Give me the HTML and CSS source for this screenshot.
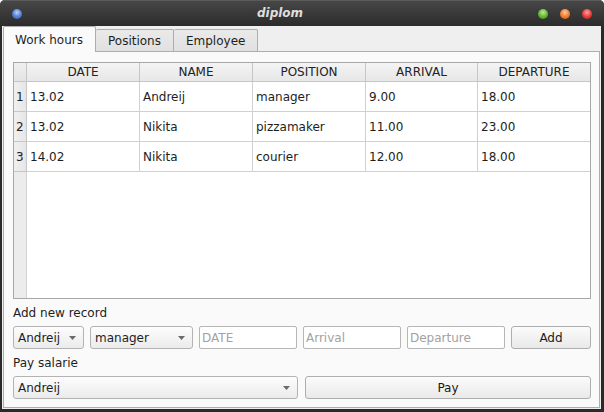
FILE: index.html
```html
<!DOCTYPE html>
<html>
<head>
<meta charset="utf-8">
<link rel="stylesheet" href="styles.css">
</head>
<body>
<div class="window">
  <div class="titlebar">
    <span class="dot blue"></span>
    <span class="title">diplom</span>
    <div class="controls">
      <span class="dot green"></span>
      <span class="dot orange"></span>
      <span class="dot red"></span>
    </div>
  </div>
  <div class="client">
    <div class="tabs">
      <div class="tab active">Work hours</div>
      <div class="tab">Positions</div>
      <div class="tab">Employee</div>
    </div>
    <div class="pane">
      <div class="table">
        <div class="hcell corner"></div>
        <div class="hcell">DATE</div>
        <div class="hcell">NAME</div>
        <div class="hcell">POSITION</div>
        <div class="hcell">ARRIVAL</div>
        <div class="hcell last">DEPARTURE</div>

        <div class="vcell">1</div>
        <div class="cell">13.02</div>
        <div class="cell">Andreij</div>
        <div class="cell">manager</div>
        <div class="cell">9.00</div>
        <div class="cell last">18.00</div>

        <div class="vcell">2</div>
        <div class="cell">13.02</div>
        <div class="cell">Nikita</div>
        <div class="cell">pizzamaker</div>
        <div class="cell">11.00</div>
        <div class="cell last">23.00</div>

        <div class="vcell">3</div>
        <div class="cell">14.02</div>
        <div class="cell">Nikita</div>
        <div class="cell">courier</div>
        <div class="cell">12.00</div>
        <div class="cell last">18.00</div>

        <div class="vfill"></div>
        <div class="fill"></div>
      </div>

      <div class="label">Add new record</div>
      <div class="row1">
        <div class="combo w71"><span>Andreij</span><svg width="7" height="4" viewBox="0 0 7 4"><polygon points="0,0 7,0 3.5,4" fill="#6a6a6a"/></svg></div>
        <div class="combo w103"><span>manager</span><svg width="7" height="4" viewBox="0 0 7 4"><polygon points="0,0 7,0 3.5,4" fill="#6a6a6a"/></svg></div>
        <div class="input w98">DATE</div>
        <div class="input w98">Arrival</div>
        <div class="input w98">Departure</div>
        <div class="button w80">Add</div>
      </div>

      <div class="label">Pay salarie</div>
      <div class="row2">
        <div class="combo"><span>Andreij</span><svg width="7" height="4" viewBox="0 0 7 4"><polygon points="0,0 7,0 3.5,4" fill="#6a6a6a"/></svg></div>
        <div class="button">Pay</div>
      </div>
    </div>
  </div>
</div>
</body>
</html>
```

FILE: styles.css
```css
* { box-sizing: border-box; }

html, body {
  margin: 0;
  padding: 0;
  background: #ffffff;
}

body {
  font-family: "DejaVu Sans", sans-serif;
  font-size: 12px;
  color: #1e1e1e;
}

.window {
  width: 604px;
  height: 412px;
  background: #2a2a2a;
  border-radius: 5px 5px 0 0;
  padding: 0 3px 3px 2px;
  display: flex;
  flex-direction: column;
}

.titlebar {
  height: 26px;
  margin: 0 -3px 0 -2px;
  padding: 0 12px;
  border-radius: 5px 5px 0 0;
  background: linear-gradient(#474747, #2b2b2b);
  border-top: 1px solid #5a5a5a;
  display: flex;
  align-items: center;
}

.dot {
  width: 10px;
  height: 10px;
  border-radius: 50%;
  display: block;
  flex: none;
}

.blue { background: radial-gradient(circle at 50% 35%, #c0d4f8 0%, #5f88db 45%, #2f52a6 100%); }
.green { background: radial-gradient(circle at 50% 35%, #bdec93 0%, #66b834 50%, #3f8a1b 100%); }
.orange { background: radial-gradient(circle at 50% 35%, #fbc8a0 0%, #f08034 50%, #c05514 100%); }
.red { background: radial-gradient(circle at 50% 35%, #fca4a4 0%, #ec4040 50%, #b01c1c 100%); }

.title {
  flex: 1;
  text-align: center;
  font-weight: bold;
  font-style: italic;
  color: #dedede;
  font-size: 12px;
  line-height: 14px;
  margin-top: -1px;
}

.controls {
  display: flex;
  gap: 12px;
}

.client {
  flex: 1;
  background: #efefef;
  padding: 0 1px 1px 1px;
  display: flex;
  flex-direction: column;
}

.tabs {
  height: 25px;
  display: flex;
  align-items: flex-end;
  position: relative;
  z-index: 1;
}

.tab {
  height: 22px;
  padding: 0 12px;
  border: 1px solid #adadad;
  border-bottom: none;
  border-left: none;
  border-radius: 2px 2px 0 0;
  background: linear-gradient(#eaeaea, #e0e0e0);
  display: flex;
  align-items: center;
  line-height: 14px;
  color: #1e1e1e;
}

.tab.active {
  height: 26px;
  margin-bottom: -1px;
  border-left: 1px solid #adadad;
  background: #fafafa;
  padding: 0 12px 0 11px;
  width: 93px;
}

.pane {
  flex: 1;
  background: #fafafa;
  border: 1px solid #adadad;
  padding: 10px 8px 8px 9px;
  display: flex;
  flex-direction: column;
}

.table {
  height: 237px;
  border: 1px solid #a8a8a8;
  background: #ffffff;
  display: grid;
  grid-template-columns: 13px 113px 113px 113px 112px 1fr;
  grid-template-rows: 19px 30px 30px 30px 1fr;
  margin-bottom: 7px;
}

.hcell {
  background: linear-gradient(#f4f4f4, #e7e7e7);
  border-right: 1px solid #c6c6c6;
  border-bottom: 1px solid #c6c6c6;
  display: flex;
  align-items: center;
  justify-content: center;
  line-height: 14px;
  color: #222;
}

.hcell.corner { background: linear-gradient(#efefef, #e4e4e4); }

.vcell {
  background: linear-gradient(to right, #f0f0f0, #e6e6e6);
  border-right: 1px solid #c6c6c6;
  border-bottom: 1px solid #c6c6c6;
  display: flex;
  align-items: center;
  padding-left: 2px;
  line-height: 14px;
  color: #222;
}

.cell {
  border-right: 1px solid #d0d0d0;
  border-bottom: 1px solid #d0d0d0;
  display: flex;
  align-items: center;
  padding-left: 3px;
  line-height: 14px;
}

.last { border-right: none; }

.vfill {
  background: #ececec;
  border-right: 1px solid #d2d2d2;
}

.fill {
  grid-column: 2 / 7;
  background: #ffffff;
}

.label {
  height: 14px;
  line-height: 14px;
  margin-bottom: 6px;
}

.row1 {
  height: 23px;
  display: flex;
  gap: 6px;
  margin-bottom: 7px;
}

.row2 {
  height: 23px;
  display: grid;
  grid-template-columns: 285px 1fr;
  gap: 7px;
}

.w71 { width: 71px; }
.w103 { width: 103px; }
.w98 { width: 98px; }
.w80 { flex: 1; }

.combo {
  height: 23px;
  border: 1px solid #b3b3b3;
  border-radius: 3px;
  background: linear-gradient(#fdfdfd, #ebebeb);
  display: flex;
  align-items: center;
  justify-content: space-between;
  padding: 0 7px 0 4px;
  line-height: 14px;
}

.combo svg { flex: none; }

.input {
  height: 23px;
  border: 1px solid #b6b6b6;
  border-radius: 2px;
  background: #ffffff;
  color: #a2a2a2;
  display: flex;
  align-items: center;
  padding-left: 2px;
  line-height: 14px;
}

.button {
  height: 23px;
  border: 1px solid #aeaeae;
  border-radius: 3px;
  background: linear-gradient(#fbfbfb, #e9e9e9);
  display: flex;
  align-items: center;
  justify-content: center;
  line-height: 14px;
  color: #1a1a1a;
}
```
